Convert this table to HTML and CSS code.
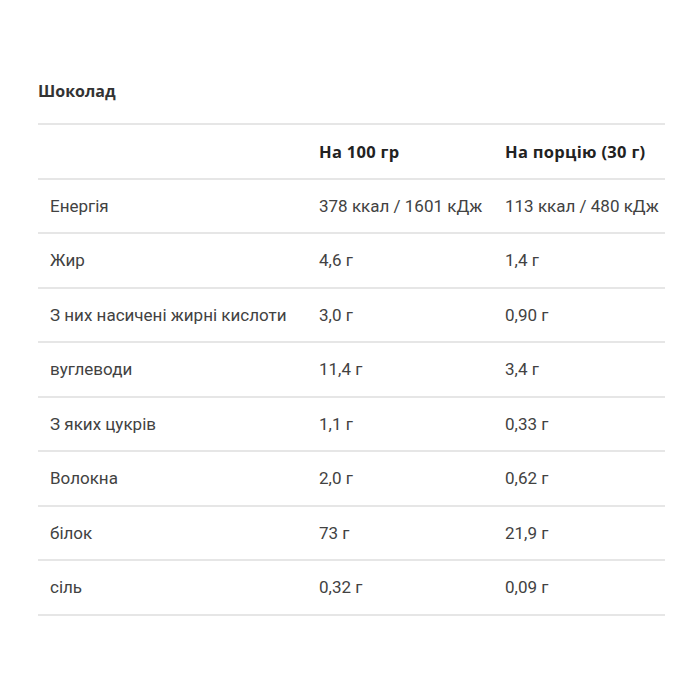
FILE: index.html
```html
<!DOCTYPE html>
<html lang="uk">
<head>
<meta charset="utf-8">
<link rel="stylesheet" href="styles.css">
</head>
<body>
<div class="wrap">
  <h3 class="title">Шоколад</h3>
  <table class="nutr">
    <colgroup>
      <col class="c1"><col class="c2"><col class="c3">
    </colgroup>
    <thead>
      <tr><th></th><th>На 100 гр</th><th>На порцію (30 г)</th></tr>
    </thead>
    <tbody>
      <tr><td>Енергія</td><td>378 ккал / 1601 кДж</td><td>113 ккал / 480 кДж</td></tr>
      <tr><td>Жир</td><td>4,6 г</td><td>1,4 г</td></tr>
      <tr><td>З них насичені жирні кислоти</td><td>3,0 г</td><td>0,90 г</td></tr>
      <tr><td>вуглеводи</td><td>11,4 г</td><td>3,4 г</td></tr>
      <tr><td>З яких цукрів</td><td>1,1 г</td><td>0,33 г</td></tr>
      <tr><td>Волокна</td><td>2,0 г</td><td>0,62 г</td></tr>
      <tr><td>білок</td><td>73 г</td><td>21,9 г</td></tr>
      <tr><td>сіль</td><td>0,32 г</td><td>0,09 г</td></tr>
    </tbody>
  </table>
</div>
</body>
</html>
```
FILE: styles.css
```css
html, body { margin: 0; padding: 0; background: #fff; }
body { font-family: Roboto, "Noto Sans", sans-serif; color: #3a3a3a; }
.wrap { padding: 79px 35px 0 38px; }
.title {
  margin: 0 0 20px 0;
  font-family: "Open Sans", sans-serif;
  font-weight: 700;
  font-size: 16px;
  line-height: 24px;
  color: #333;
}
.nutr { width: 627px; border-collapse: collapse; table-layout: fixed; }
.c1 { width: 269px; }
.c2 { width: 186px; }
.c3 { width: 172px; }
.nutr th, .nutr td {
  height: 52.5px;
  padding: 0 12px;
  text-align: left;
  border-bottom: 2px solid #e6e6e6;
  white-space: nowrap;
}
.nutr thead th { border-top: 2px solid #e6e6e6; }
.nutr th {
  font-family: "Open Sans", sans-serif;
  font-weight: 700;
  font-size: 16.5px;
  letter-spacing: 0.3px;
  color: #222;
}
.nutr td { font-size: 17px; color: #424242; }
```
